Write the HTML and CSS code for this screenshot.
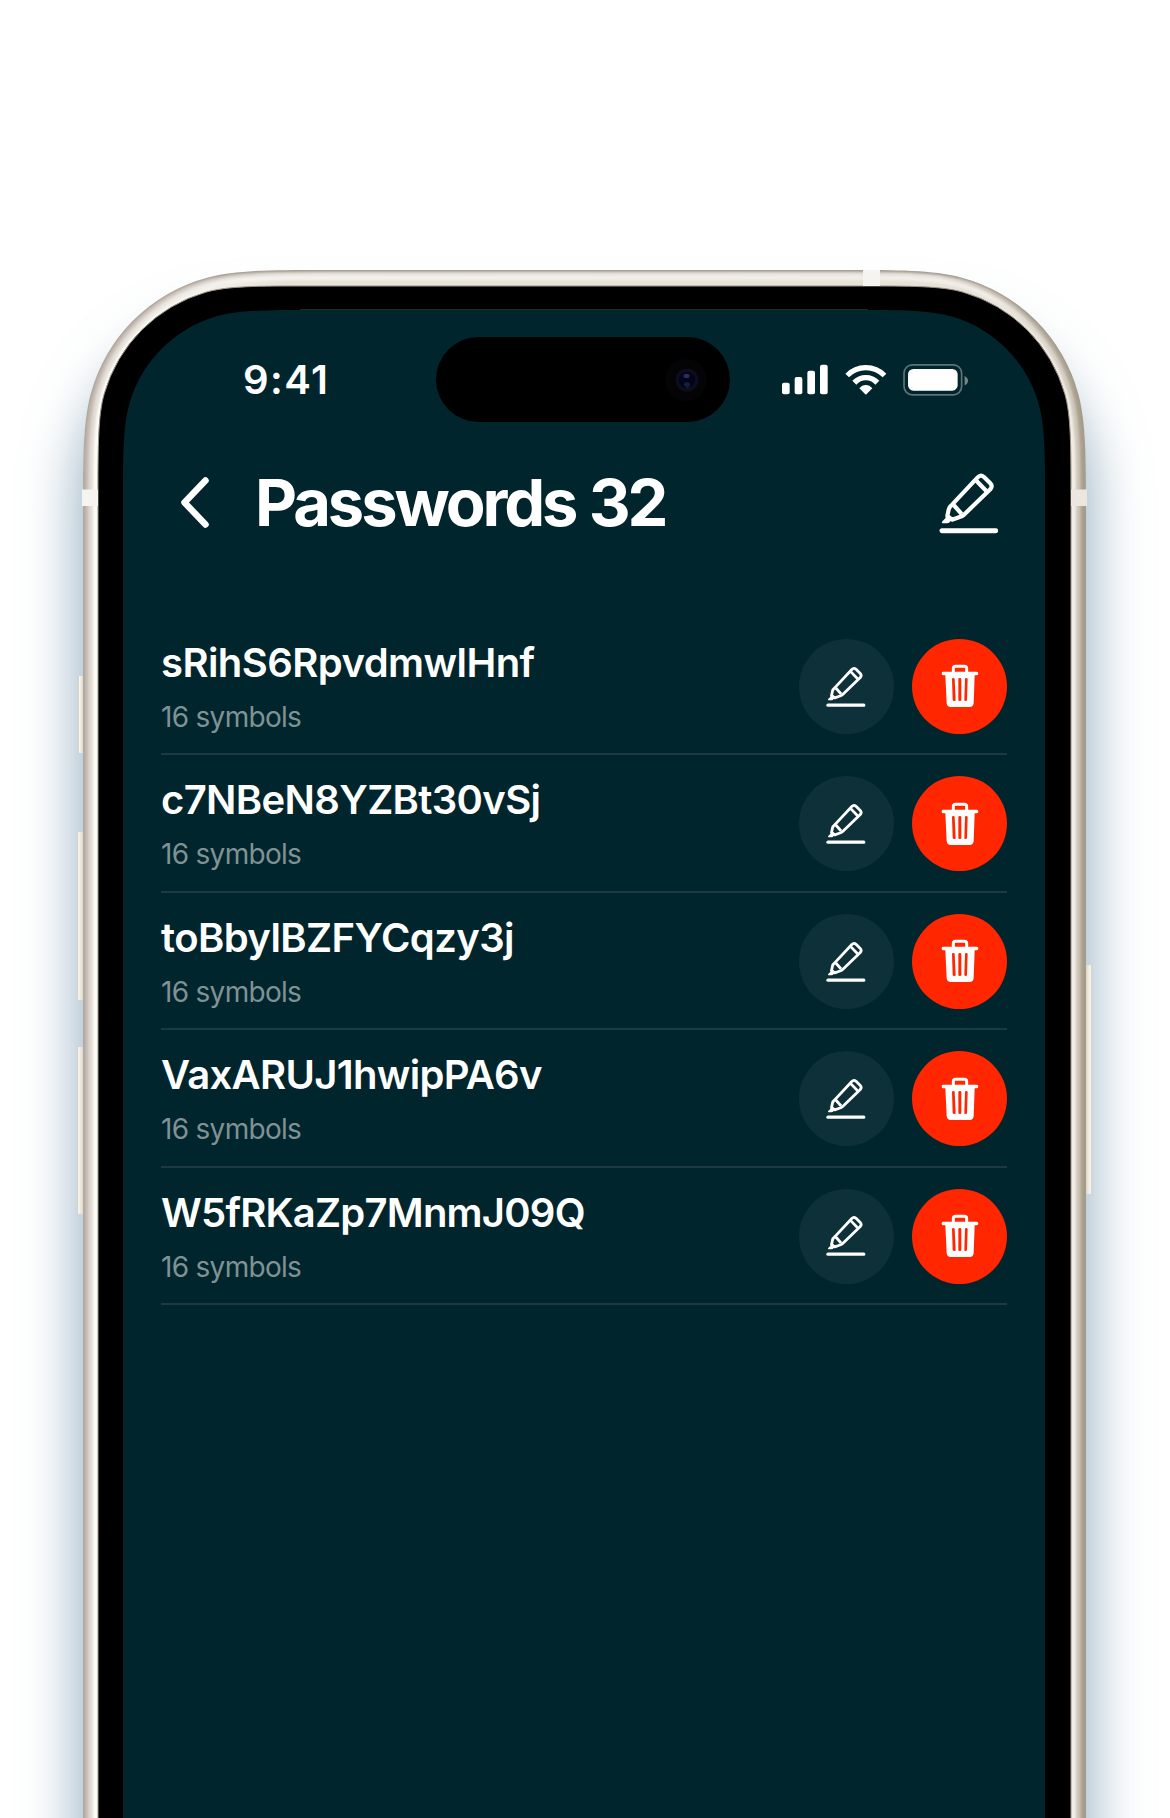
FILE: index.html
```html
<!DOCTYPE html>
<html lang="en">
<head>
<meta charset="utf-8">
<title>Passwords</title>
<link rel="stylesheet" href="styles.css">
</head>
<body>
<svg class="defs" width="0" height="0" aria-hidden="true">
  <symbol id="pencil" viewBox="118 96 178 186">
    <g fill="none" stroke="#fff" stroke-width="12.5" stroke-linejoin="round" stroke-linecap="round">
      <path d="M158 193L234 112Q243 102 253 111L272 130Q280 138 272 148L193 224Q187 230 178 232L157 239L143 228L147 209Q149 200 158 193Z"/>
      <path d="M228 120L260 153M162 195L186 222" stroke-linecap="butt"/>
      <path d="M127 272H288" stroke-width="15"/>
    </g>
    <path d="M141 224L161 241L152 244Q150 250 142 250H129Q124 248 129 243L137 235Z" fill="#fff"/>
  </symbol>
  <symbol id="trash" viewBox="482 132 114 132">
    <path d="M519 160V145Q519 138.500 526 138.500H552Q559 138.500 559 145V160" fill="none" stroke="#fff" stroke-width="9"/>
    <path fill="#fff" fill-rule="evenodd" d="M488 155H589Q594 155 594 160.500Q594 166 589 166H583L580 249Q579 261 568 261H511Q500 261 499 249L495 166H488Q484 166 484 160.500Q484 155 488 155ZM515 177Q515 174 519 174Q523 174 523 177L526 240Q526 243 522 243Q517 243 517 240ZM534 177Q534 174 538.500 174Q543 174 543 177V240Q543 243 538.500 243Q534 243 534 240ZM554 177Q554 174 558 174Q562 174 562 177L560 240Q560 243 556 243Q552 243 552 240Z"/>
  </symbol>
</svg>

<main class="stage">
  <svg class="device" viewBox="0 0 1170 1818" aria-hidden="true">
    <defs>
      <path id="shell" d="M0 1700V240C0 190 0 153 7.400 125A165 165 0 0 1 125 7.400C153 0 190 0 240 0H763C813 0 850 0 878 7.400A165 165 0 0 1 995.600 125C1003 153 1003 190 1003 240V1700Z"/>
      <clipPath id="shellClip"><use href="#shell"/></clipPath>
      <filter id="soft" filterUnits="userSpaceOnUse" x="-100" y="100" width="1370" height="2200"><feGaussianBlur stdDeviation="30"/></filter>
      <filter id="brush" filterUnits="userSpaceOnUse" x="-20" y="-20" width="1043" height="1740"><feGaussianBlur stdDeviation=".8"/></filter>
      <linearGradient id="edge1" gradientUnits="userSpaceOnUse" x1="0" y1="0" x2="1003" y2="0">
        <stop offset="0" stop-color="#b0a69e"/><stop offset=".2" stop-color="#a09993"/><stop offset=".8" stop-color="#a09993"/><stop offset="1" stop-color="#a39a8a"/>
      </linearGradient>
      <linearGradient id="edge2" gradientUnits="userSpaceOnUse" x1="0" y1="0" x2="1003" y2="0">
        <stop offset="0" stop-color="#c5bcb4"/><stop offset=".2" stop-color="#e6e1da"/><stop offset=".85" stop-color="#e6e1da"/><stop offset="1" stop-color="#a99f8e"/>
      </linearGradient>
      <linearGradient id="edge3" gradientUnits="userSpaceOnUse" x1="0" y1="0" x2="1003" y2="0">
        <stop offset="0" stop-color="#e0dad2"/><stop offset=".15" stop-color="#f5f3ef"/><stop offset=".9" stop-color="#f1eee8"/><stop offset="1" stop-color="#cbc3b4"/>
      </linearGradient>
      <linearGradient id="metal" gradientUnits="userSpaceOnUse" x1="0" y1="0" x2="1003" y2="0">
        <stop offset="0" stop-color="#fffdf7"/><stop offset=".12" stop-color="#f5f2ea"/><stop offset=".2" stop-color="#e7e1d6"/><stop offset=".88" stop-color="#e7e1d6"/><stop offset="1" stop-color="#f2eee6"/>
      </linearGradient>
      <linearGradient id="key" x1="0" y1="0" x2="1" y2="0">
        <stop offset="0" stop-color="#c9c1b5"/><stop offset=".2" stop-color="#f8f6f1"/><stop offset=".55" stop-color="#e9e1d4"/><stop offset="1" stop-color="#d8ccb8"/>
      </linearGradient>
      <linearGradient id="keyRight" href="#key" gradientTransform="matrix(-1 0 0 1 1 0)"/>
    </defs>
    <rect x="83" y="328" width="1003" height="1900" rx="165" fill="#86a4b9" filter="url(#soft)"/>
    <g fill="url(#key)">
      <rect x="78" y="676" width="7" height="77" rx="2"/>
      <rect x="77" y="832" width="8" height="168" rx="2"/>
      <rect x="77" y="1047" width="8" height="167" rx="2"/>
    </g>
    <rect x="1084" y="965" width="8" height="229" rx="2" fill="url(#keyRight)"/>
    <g transform="translate(83 270)" clip-path="url(#shellClip)" fill="none">
      <use href="#shell" fill="url(#metal)"/>
      <g filter="url(#brush)">
        <use href="#shell" stroke="url(#edge3)" stroke-width="20"/>
        <use href="#shell" stroke="url(#edge2)" stroke-width="11"/>
        <use href="#shell" stroke="url(#edge1)" stroke-width="4"/>
      </g>
    </g>
    <path transform="translate(98 286)" stroke="#96918b" stroke-width="1" d="M0 1700V210C0 160 0 129.600 6.150 108A148 148 0 0 1 108 6.150C129.600 0 160 0 210 0H763C813 0 843.400 0 865 6.150A148 148 0 0 1 966.850 108C973 129.600 973 160 973 210V1700Z"/>
    <path transform="translate(123 310)" fill="#00252c" d="M0 1700V190C0 145 0 114.900 6.860 92A127 127 0 0 1 92 6.860C114.900 0 145 0 190 0H732C777 0 807.100 0 830 6.860A127 127 0 0 1 915.140 92C922 114.900 922 145 922 190V1700Z"/>
    <path d="M300 309.500H868" stroke="#292929"/>
    <path fill="#f5f4f0" d="M863 270H880V286H863ZM82 489.500H98V506H82Z"/>
    <path fill="#ebe7de" d="M1071 489.500H1087V506H1071Z"/>
  </svg>

  <section class="screen">
    <div class="status">
      <span class="time">9:41</span>
      <div class="island">
        <svg class="camera" viewBox="0 0 42 42">
          <circle cx="21" cy="21" r="21" fill="#040305"/>
          <circle cx="22" cy="21" r="11.500" fill="#0c0c1c"/>
          <circle cx="22" cy="21" r="8" fill="#03041a"/>
          <ellipse cx="21.500" cy="17" rx="3" ry="2.200" fill="#2b2d58"/>
          <ellipse cx="22" cy="25.500" rx="3" ry="2.200" fill="#0c2638"/>
          <circle cx="22.500" cy="28" r="1.500" fill="#2a1040"/>
        </svg>
      </div>
      <div class="signals">
        <svg class="bars" viewBox="127 70 137 98" fill="#fff"><rect x="127" y="129" width="23" height="35" rx="6"/><rect x="165" y="112" width="23" height="52" rx="6"/><rect x="203" y="93" width="23" height="71" rx="6"/><rect x="241" y="75" width="23" height="89" rx="6"/></svg>
        <svg class="wifi" viewBox="315 70 125 98" fill="#fff"><path d="M316 102Q341 76 377.500 76Q414 76 439 102L428 113Q406 92 377.500 92Q349 92 327 113Z"/><path d="M337 123Q354 106 377.500 106Q401 106 418 123L406 135Q394 122 377.500 122Q361 122 349 135Z"/><path d="M358 146Q366 136 377.500 136Q389 136 397 146L380 163Q377.500 166 375 163Z"/></svg>
        <svg class="battery" viewBox="488 68 198 100"><rect x="491" y="73.500" width="173" height="90" rx="25" fill="none" stroke="#fff" stroke-opacity=".36" stroke-width="5"/><rect x="503" y="86" width="149" height="65" rx="16" fill="#fff"/><path d="M673 107Q683 112 683 121Q683 130 673 135Z" fill="#fff" opacity=".45"/></svg>
      </div>
    </div>

    <header class="header">
      <svg class="back" viewBox="0 0 30 52"><path d="M24.500 3.500L3.500 25.500L24.500 47.500" fill="none" stroke="#fff" stroke-width="6.500" stroke-linecap="round" stroke-linejoin="round"/></svg>
      <h1 class="title">Passwords 32</h1>
      <svg class="edit-all"><use href="#pencil"/></svg>
    </header>

    <ul class="list">
      <li class="row"><div class="entry"><span class="password p1">sRihS6RpvdmwlHnf</span><span class="meta">16 symbols</span></div><span class="button"><svg class="pencil"><use href="#pencil"/></svg></span><span class="button delete"><svg class="trash"><use href="#trash"/></svg></span></li>
      <li class="row"><div class="entry"><span class="password p2">c7NBeN8YZBt30vSj</span><span class="meta">16 symbols</span></div><span class="button"><svg class="pencil"><use href="#pencil"/></svg></span><span class="button delete"><svg class="trash"><use href="#trash"/></svg></span></li>
      <li class="row"><div class="entry"><span class="password p3">toBbylBZFYCqzy3j</span><span class="meta">16 symbols</span></div><span class="button"><svg class="pencil"><use href="#pencil"/></svg></span><span class="button delete"><svg class="trash"><use href="#trash"/></svg></span></li>
      <li class="row"><div class="entry"><span class="password p4">VaxARUJ1hwipPA6v</span><span class="meta">16 symbols</span></div><span class="button"><svg class="pencil"><use href="#pencil"/></svg></span><span class="button delete"><svg class="trash"><use href="#trash"/></svg></span></li>
      <li class="row"><div class="entry"><span class="password p5">W5fRKaZp7MnmJ09Q</span><span class="meta">16 symbols</span></div><span class="button"><svg class="pencil"><use href="#pencil"/></svg></span><span class="button delete"><svg class="trash"><use href="#trash"/></svg></span></li>
    </ul>
  </section>
</main>
</body>
</html>
```
FILE: styles.css
```css
* { box-sizing: border-box; }
body { margin: 0; background: #fff; color: #fff; font-family: Inter, "Liberation Sans", sans-serif; }
svg { display: block; flex: none; }
.defs { position: absolute; }
.stage { position: relative; width: 1170px; height: 1818px; padding: 310px 125px 0 123px; overflow: hidden; }
.device { position: absolute; left: 0; top: 0; width: 1170px; height: 1818px; }
.screen { position: relative; width: 922px; }

.status { display: grid; grid-template-columns: 312.5px 294.5px 1fr; align-items: center; height: 139px; }
.time { padding-left: 120px; font-size: 40px; line-height: 48px; font-weight: 600; letter-spacing: 1.400px; }
.island { display: flex; align-items: center; justify-content: flex-end; height: 85px; padding-right: 23.500px; border-radius: 43px; background: #000; }
.camera { width: 42px; height: 42px; }
.signals { display: flex; align-items: center; padding-left: 52.300px; }
.bars { width: 45.700px; height: 32.700px; }
.wifi { width: 41.700px; height: 32.700px; margin-left: 17px; }
.battery { width: 66px; height: 33.300px; margin-left: 16px; }

.header { display: flex; align-items: center; height: 107px; padding: 0 47px 0 57.500px; }
.back { width: 30px; height: 52px; }
.title { flex: 1; margin: 0 0 0 44.500px; font-size: 65px; line-height: 80px; font-weight: 700; letter-spacing: -3.100px; word-spacing: 1px; white-space: nowrap; }
.edit-all { width: 59.300px; height: 62px; }

.list { margin: 62px 0 0; padding: 0 38px; list-style: none; }
.row { display: flex; align-items: center; height: 137.400px; border-bottom: 2px solid #1d3a42; }
.entry { display: flex; flex-direction: column; flex: 1; padding-top: 3.600px; }
.password { font-size: 40px; line-height: 50px; font-weight: 600; white-space: nowrap; }
.p1 { letter-spacing: -0.560px; }
.p2 { letter-spacing: -0.640px; }
.p3 { letter-spacing: -0.580px; }
.p4 { letter-spacing: -0.670px; }
.p5 { letter-spacing: -0.780px; }
.meta { margin-top: 9px; font-size: 28px; line-height: 40px; letter-spacing: -0.700px; color: #7f9295; }
.button { display: flex; align-items: center; justify-content: center; width: 95px; height: 95px; margin-top: 1.500px; border-radius: 50%; background: #0e3038; }
.delete { margin-left: 18.500px; background: #ff2600; }
.pencil { width: 39.600px; height: 41.400px; }
.trash { width: 38px; height: 44px; }
```
